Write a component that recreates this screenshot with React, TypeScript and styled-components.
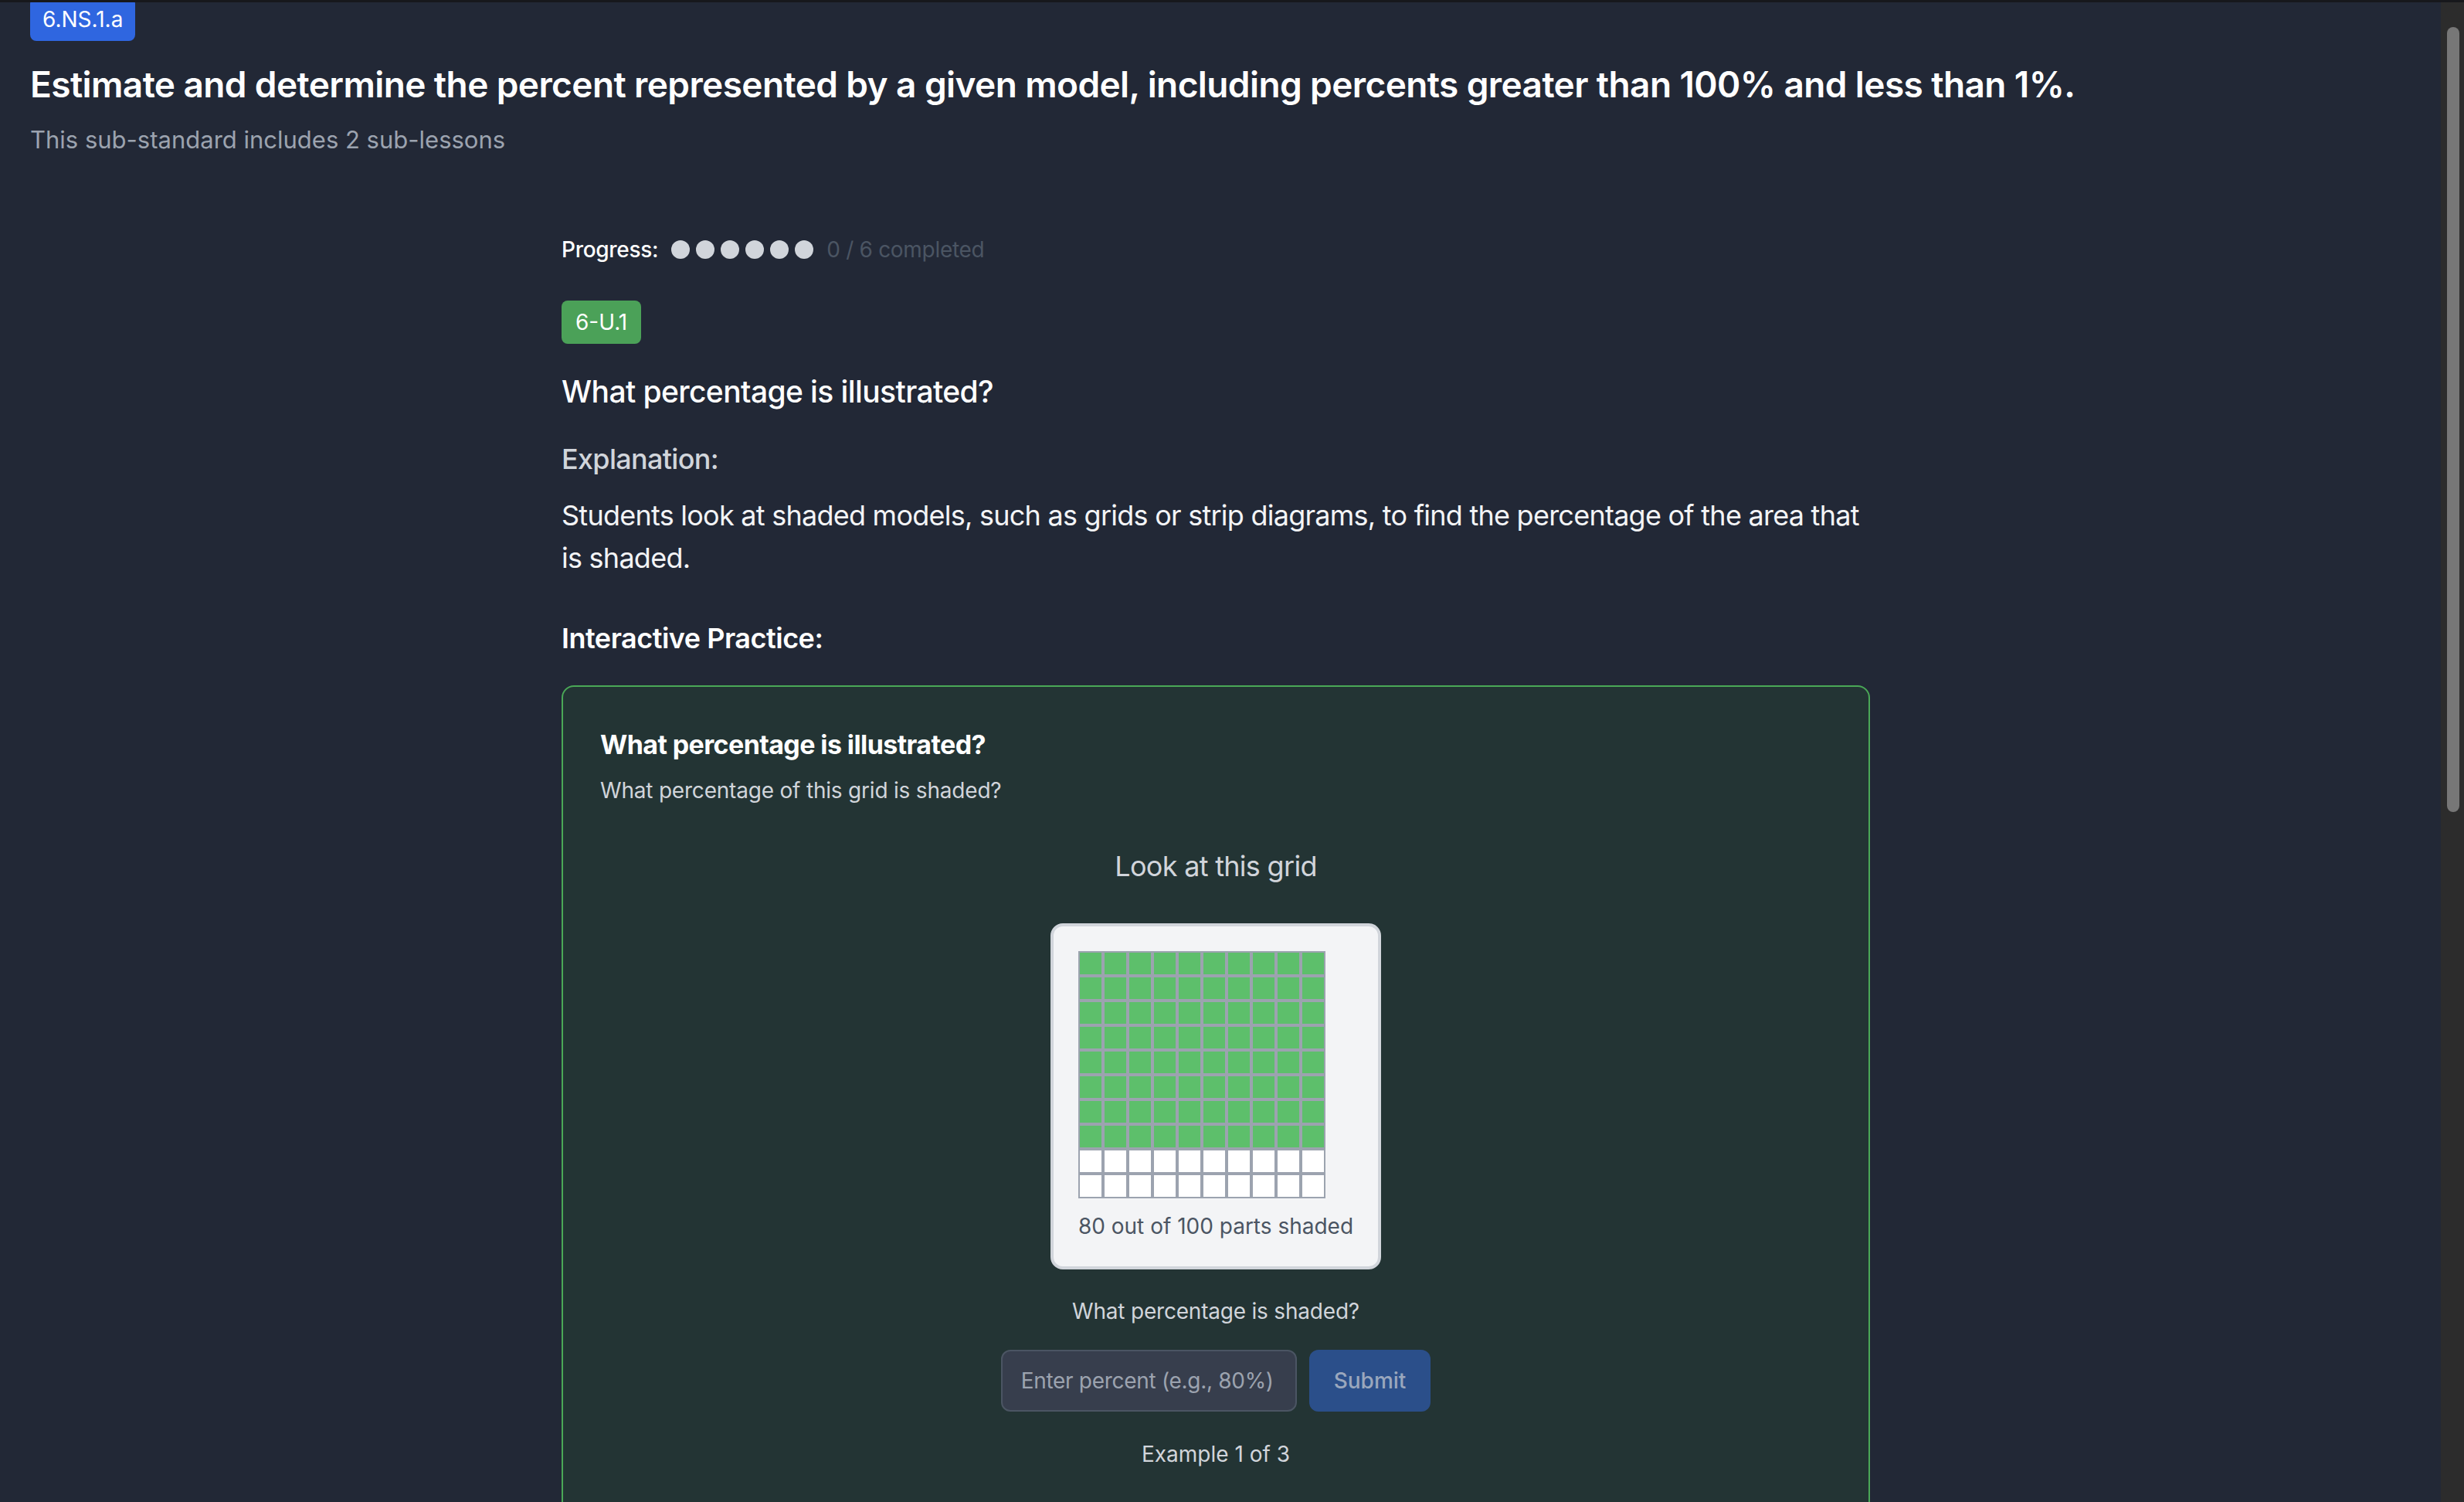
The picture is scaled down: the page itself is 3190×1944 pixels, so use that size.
//-----------------------------------------------------------------------------
// Imports
//-----------------------------------------------------------------------------
import React from 'react'
import styled, { createGlobalStyle } from 'styled-components'

//-----------------------------------------------------------------------------
// Data
//-----------------------------------------------------------------------------
const TOTAL_PARTS = 100
const SHADED_PARTS = 80
const LESSON_COUNT = 6

//-----------------------------------------------------------------------------
// Component
//-----------------------------------------------------------------------------
export const App = () => {
  const cells = Array.from({ length: TOTAL_PARTS }, (_, i) => i < SHADED_PARTS)

  return (
    <>
      <GlobalStyle />
      <Window>
        <Page>
          <Header>
            <StandardBadge>6.NS.1.a</StandardBadge>
            <Title>
              Estimate and determine the percent represented by a given model, including percents greater than 100% and less than 1%.
            </Title>
            <Subtitle>This sub-standard includes 2 sub-lessons</Subtitle>
          </Header>

          <Lesson>
            <ProgressRow>
              <ProgressLabel>Progress:</ProgressLabel>
              <Dots>
                {Array.from({ length: LESSON_COUNT }, (_, i) => (
                  <Dot key={i} />
                ))}
              </Dots>
              <ProgressText>0 / 6 completed</ProgressText>
            </ProgressRow>

            <LessonBadge>6-U.1</LessonBadge>
            <LessonTitle>What percentage is illustrated?</LessonTitle>
            <SectionLabel>Explanation:</SectionLabel>
            <Explanation>
              Students look at shaded models, such as grids or strip diagrams, to find the percentage of the area that is shaded.
            </Explanation>
            <PracticeLabel>Interactive Practice:</PracticeLabel>

            <PracticeCard>
              <CardTitle>What percentage is illustrated?</CardTitle>
              <CardSubtitle>What percentage of this grid is shaded?</CardSubtitle>

              <Exercise>
                <Prompt>Look at this grid</Prompt>
                <ModelBox>
                  <Grid>
                    {cells.map((shaded, i) => (
                      <Cell key={i} $shaded={shaded} />
                    ))}
                  </Grid>
                  <ModelCaption>80 out of 100 parts shaded</ModelCaption>
                </ModelBox>
                <Question>What percentage is shaded?</Question>
                <AnswerRow>
                  <AnswerInput placeholder="Enter percent (e.g., 80%)" />
                  <SubmitButton disabled>Submit</SubmitButton>
                </AnswerRow>
                <Counter>Example 1 of 3</Counter>
              </Exercise>
            </PracticeCard>
          </Lesson>
        </Page>

        <ScrollRail>
          <ScrollThumb />
        </ScrollRail>
      </Window>
    </>
  )
}

//-----------------------------------------------------------------------------
// Styled Components
//-----------------------------------------------------------------------------
const GlobalStyle = createGlobalStyle`
  * {
    box-sizing: border-box;
  }

  html, body {
    margin: 0;
    padding: 0;
    height: 100%;
    overflow: hidden;
    background: #17181c;
    font-family: Inter, "Noto Sans", "Liberation Sans", sans-serif;
  }
`

const Window = styled.div`
  display: flex;
  margin-top: 3px;
  height: calc(100vh - 3px);
  background: #222836;
  color: #f3f4f6;
`

const Page = styled.main`
  flex: 1;
  min-width: 0;
  overflow: hidden;
`

const ScrollRail = styled.aside`
  flex: 0 0 30px;
  padding: 32px 6px 0 8px;
  background: #2c2c2c;
`

const ScrollThumb = styled.div`
  height: 1016px;
  border-radius: 8px;
  background: #777777;
`

const Header = styled.header`
  padding: 0 39px;
`

const StandardBadge = styled.span`
  display: inline-block;
  margin-top: -6px;
  padding: 8px 16px;
  border-radius: 8px;
  background: #2f66e0;
  color: #ffffff;
  font-size: 28px;
  line-height: 40px;
`

const Title = styled.h1`
  margin: 24px 0 0;
  font-size: 46px;
  line-height: 64px;
  font-weight: 600;
  letter-spacing: -0.6px;
  color: #ffffff;
`

const Subtitle = styled.p`
  margin: 16px 0 0;
  font-size: 31px;
  line-height: 48px;
  color: #9ca3af;
`

const Lesson = styled.section`
  max-width: 1694px;
  margin: 98px auto 0;
  padding-bottom: 200px;
  position: relative;
  left: -6px;
`

const ProgressRow = styled.div`
  display: flex;
  align-items: center;
  gap: 17px;
  height: 40px;
`

const ProgressLabel = styled.span`
  font-size: 28px;
  font-weight: 500;
  letter-spacing: -0.3px;
  color: #ffffff;
`

const Dots = styled.div`
  display: flex;
  gap: 8px;
`

const Dot = styled.span`
  width: 24px;
  height: 24px;
  border-radius: 50%;
  background: #d1d5db;
`

const ProgressText = styled.span`
  font-size: 28px;
  letter-spacing: -0.3px;
  color: #4b5563;
`

const LessonBadge = styled.span`
  display: inline-block;
  margin-top: 46px;
  padding: 8px 18px;
  border-radius: 8px;
  background: #4ba158;
  color: #ffffff;
  font-size: 28px;
  line-height: 40px;
`

const LessonTitle = styled.h2`
  margin: 34px 0 0;
  font-size: 39px;
  line-height: 56px;
  font-weight: 500;
  letter-spacing: -0.6px;
  color: #ffffff;
`

const SectionLabel = styled.h3`
  margin: 31px 0 0;
  font-size: 36px;
  line-height: 56px;
  font-weight: 500;
  letter-spacing: -0.7px;
  color: #d1d5db;
`

const Explanation = styled.p`
  margin: 18px 0 0;
  font-size: 36px;
  line-height: 55px;
  letter-spacing: -0.75px;
  color: #f3f4f6;
`

const PracticeLabel = styled.h3`
  margin: 48px 0 0;
  font-size: 36px;
  line-height: 56px;
  font-weight: 600;
  letter-spacing: -0.5px;
  color: #ffffff;
`

const PracticeCard = styled.div`
  margin-top: 33px;
  min-height: 1400px;
  padding: 47px 48px;
  border: 2px solid #4aa857;
  border-radius: 16px;
  background: #233434;
`

const CardTitle = styled.h4`
  margin: 0;
  font-size: 34px;
  line-height: 56px;
  font-weight: 700;
  letter-spacing: -0.6px;
  color: #ffffff;
`

const CardSubtitle = styled.p`
  margin: 11px 0 0;
  font-size: 28px;
  line-height: 40px;
  letter-spacing: -0.2px;
  color: #d1d5db;
`

const Exercise = styled.div`
  display: flex;
  flex-direction: column;
  align-items: center;
  margin-top: 50px;
`

const Prompt = styled.p`
  margin: 0;
  font-size: 36px;
  line-height: 56px;
  letter-spacing: -0.7px;
  color: #d1d5db;
`

const ModelBox = styled.div`
  margin-top: 46px;
  padding: 32px;
  border: 4px solid #d1d5db;
  border-radius: 16px;
  background: #f3f4f6;
`

const Grid = styled.div`
  display: grid;
  grid-template-columns: repeat(10, 32px);
  grid-auto-rows: 32px;
`

const Cell = styled.div<{ $shaded: boolean }>`
  border: 2px solid #9ca3af;
  background: ${p => (p.$shaded ? '#5dbf6b' : '#ffffff')};
`

const ModelCaption = styled.p`
  margin: 16px 0 0;
  font-size: 28px;
  line-height: 40px;
  color: #4b5563;
`

const Question = styled.p`
  margin: 34px 0 0;
  font-size: 28px;
  line-height: 40px;
  letter-spacing: -0.2px;
  color: #d1d5db;
`

const AnswerRow = styled.div`
  display: flex;
  gap: 16px;
  margin-top: 30px;
`

const AnswerInput = styled.input`
  width: 383px;
  height: 80px;
  padding: 0 20px 0 24px;
  border: 2px solid #4b5563;
  border-radius: 12px;
  background: #373e4d;
  color: #ffffff;
  font-family: inherit;
  font-size: 28px;
  letter-spacing: -0.3px;
  outline: none;

  &::placeholder {
    color: #9ca3af;
  }
`

const SubmitButton = styled.button`
  height: 80px;
  padding: 0 32px;
  border: none;
  border-radius: 12px;
  background: #2b4f8a;
  color: #9aa7bd;
  font-family: inherit;
  font-size: 28px;
  font-weight: 500;
`

const Counter = styled.p`
  margin: 35px 0 0;
  font-size: 28px;
  line-height: 40px;
  color: #d1d5db;
`

export default App
